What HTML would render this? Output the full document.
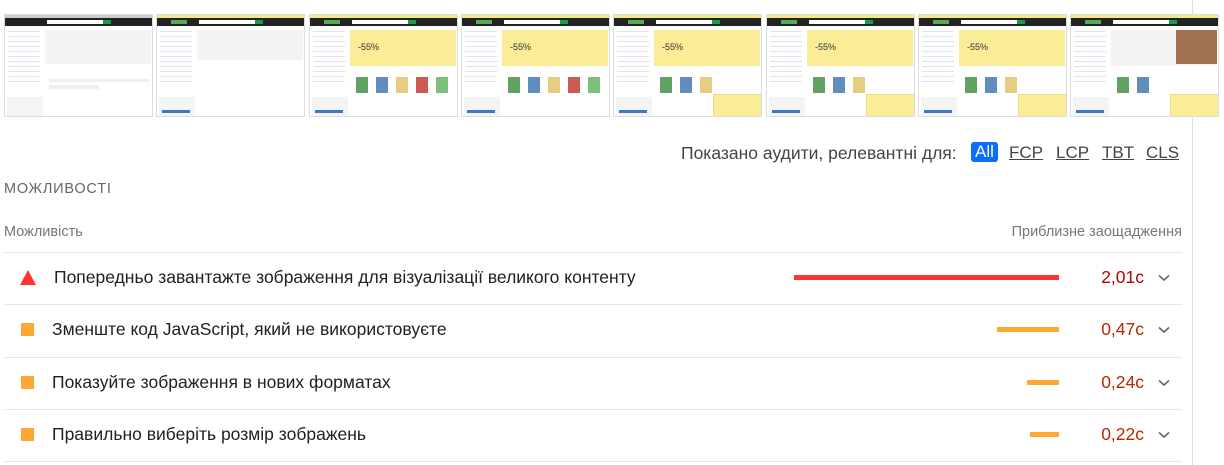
<!DOCTYPE html>
<html><head><meta charset="utf-8">
<style>
*{margin:0;padding:0;box-sizing:border-box}
body{width:1224px;height:465px;background:#fff;font-family:"Liberation Sans",Arial,sans-serif;position:relative;overflow:hidden;color:#212121}
.vline{position:absolute;left:1192px;top:0;width:1px;height:465px;background:#e0e0e0}
.f{position:absolute;top:14px;width:149px;height:103px;border:1px solid #ddd;background:#fff;overflow:hidden}
.f div{position:absolute}
.top{left:0;top:0;width:100%;height:3px;background:#f6e98a}
.hd{left:0;top:3px;width:100%;height:8px;background:#222}
.srch{left:42px;top:5px;width:56px;height:4px;background:#fff}
.go{left:98px;top:5px;width:8px;height:4px;background:#1a9d4a}
.logo{left:14px;top:5px;width:16px;height:4px;background:#5a5}
.sb{left:3px;top:13px;width:32px;height:56px;background:repeating-linear-gradient(#fff 0 3px,#dbe4ef 3px 4px,#fff 4px 5px)}
.sbb{left:2px;top:82px;width:36px;height:20px;background:#f4f4f4}
.btn{left:5px;top:95px;width:28px;height:3px;background:#3e77c2}
.ban{left:40px;top:15px;width:106px;height:36px;background:#fbec98}
.ban i{position:absolute;left:8px;top:12px;font-style:normal;font-size:9px;color:#333}
.gry{left:40px;top:15px;width:106px;height:34px;background:#f3f3f3}
.p{top:62px;width:12px;height:16px;opacity:.8}
.pop{left:99px;top:79px;width:49px;height:24px;background:#fbec98;border:1px solid #eedb80}
.t{position:absolute;font-size:17.5px;white-space:nowrap}
.fl{position:absolute;top:143px;font-size:17px;color:#444;text-decoration:underline}
.v{position:absolute;right:80px;font-size:17.5px}
</style></head><body>
<div class="vline"></div>

<div class="f" style="left:4px"><div class="top" style="background:#ccc"></div><div class="hd"></div><div class="srch"></div><div class="go"></div><div class="sb"></div><div class="sbb"></div><div class="gry"></div><div style="left:44px;top:64px;width:100px;height:3px;background:#eee"></div><div style="left:44px;top:70px;width:50px;height:4px;background:#eee"></div></div>

<div class="f" style="left:156px"><div class="top"></div><div class="hd"></div><div class="logo"></div><div class="srch"></div><div class="go"></div><div class="sb"></div><div class="sbb"></div><div class="btn"></div><div class="gry" style="height:30px"></div></div>

<div class="f" style="left:309px"><div class="top"></div><div class="hd"></div><div class="logo"></div><div class="srch"></div><div class="go"></div><div class="sb"></div><div class="sbb"></div><div class="btn"></div><div class="ban"><i>-55%</i></div><div class="p" style="left:46px;background:#3a8a3a"></div><div class="p" style="left:66px;background:#3a6fb0"></div><div class="p" style="left:86px;background:#e0c060"></div><div class="p" style="left:106px;background:#c0302a"></div><div class="p" style="left:126px;background:#5ab05a"></div></div>

<div class="f" style="left:461px"><div class="top"></div><div class="hd"></div><div class="logo"></div><div class="srch"></div><div class="go"></div><div class="sb"></div><div class="sbb"></div><div class="btn"></div><div class="ban"><i>-55%</i></div><div class="p" style="left:46px;background:#3a8a3a"></div><div class="p" style="left:66px;background:#3a6fb0"></div><div class="p" style="left:86px;background:#e0c060"></div><div class="p" style="left:106px;background:#c0302a"></div><div class="p" style="left:126px;background:#5ab05a"></div></div>

<div class="f" style="left:613px"><div class="top"></div><div class="hd"></div><div class="logo"></div><div class="srch"></div><div class="go"></div><div class="sb"></div><div class="sbb"></div><div class="btn"></div><div class="ban"><i>-55%</i></div><div class="p" style="left:46px;background:#3a8a3a"></div><div class="p" style="left:66px;background:#3a6fb0"></div><div class="p" style="left:86px;background:#e0c060"></div><div class="pop"></div></div>

<div class="f" style="left:766px"><div class="top"></div><div class="hd"></div><div class="logo"></div><div class="srch"></div><div class="go"></div><div class="sb"></div><div class="sbb"></div><div class="btn"></div><div class="ban"><i>-55%</i></div><div class="p" style="left:46px;background:#3a8a3a"></div><div class="p" style="left:66px;background:#3a6fb0"></div><div class="p" style="left:86px;background:#e0c060"></div><div class="pop"></div></div>

<div class="f" style="left:918px"><div class="top"></div><div class="hd"></div><div class="logo"></div><div class="srch"></div><div class="go"></div><div class="sb"></div><div class="sbb"></div><div class="btn"></div><div class="ban"><i>-55%</i></div><div class="p" style="left:46px;background:#3a8a3a"></div><div class="p" style="left:66px;background:#3a6fb0"></div><div class="p" style="left:86px;background:#e0c060"></div><div class="pop"></div></div>

<div class="f" style="left:1070px"><div class="top"></div><div class="hd"></div><div class="logo"></div><div class="srch"></div><div class="go"></div><div class="sb"></div><div class="sbb"></div><div class="btn"></div><div class="ban" style="background:#f3f3f3"></div><div style="left:105px;top:15px;width:41px;height:34px;background:#a07050"></div><div class="p" style="left:46px;background:#3a8a3a"></div><div class="p" style="left:66px;background:#3a6fb0"></div><div class="pop"></div></div>

<div style="position:absolute;left:681px;top:143px;font-size:17.5px;color:#444;white-space:nowrap">Показано аудити, релевантні для:</div>
<div style="position:absolute;left:971px;top:142px;width:27px;height:20px;background:#0b6cff;border-radius:3px;color:#fff;font-size:17px;text-align:center;line-height:20px">All</div>
<div class="fl" style="left:1009px">FCP</div>
<div class="fl" style="left:1056px">LCP</div>
<div class="fl" style="left:1102px">TBT</div>
<div class="fl" style="left:1146px">CLS</div>

<div style="position:absolute;left:4px;top:181px;font-size:14.5px;color:#666;letter-spacing:.8px">МОЖЛИВОСТІ</div>
<div style="position:absolute;left:4px;top:224px;font-size:14.5px;color:#777">Можливість</div>
<div style="position:absolute;right:42px;top:224px;font-size:14.5px;color:#777">Приблизне заощадження</div>

<div style="position:absolute;left:4px;top:252px;width:1178px;height:1px;background:#e6e6e6"></div>
<div style="position:absolute;left:4px;top:304px;width:1178px;height:1px;background:#e6e6e6"></div>
<div style="position:absolute;left:4px;top:357px;width:1178px;height:1px;background:#e6e6e6"></div>
<div style="position:absolute;left:4px;top:409px;width:1178px;height:1px;background:#e6e6e6"></div>
<div style="position:absolute;left:4px;top:461px;width:1178px;height:1px;background:#e6e6e6"></div>

<svg style="position:absolute;left:20px;top:270px" width="16" height="15"><polygon points="8,0 16,15 0,15" fill="#f33"/></svg>
<div style="position:absolute;left:21px;top:323px;width:13px;height:13px;background:#ffa733"></div>
<div style="position:absolute;left:21px;top:376px;width:13px;height:13px;background:#ffa733"></div>
<div style="position:absolute;left:21px;top:428px;width:13px;height:13px;background:#ffa733"></div>

<div class="t" style="left:54px;top:267px">Попередньо завантажте зображення для візуалізації великого контенту</div>
<div class="t" style="left:52px;top:319px">Зменште код JavaScript, який не використовуєте</div>
<div class="t" style="left:52px;top:372px">Показуйте зображення в нових форматах</div>
<div class="t" style="left:52px;top:424px">Правильно виберіть розмір зображень</div>

<div style="position:absolute;left:794px;top:275px;width:265px;height:5px;background:#f33"></div>
<div style="position:absolute;left:997px;top:327px;width:62px;height:5px;background:#ffa733"></div>
<div style="position:absolute;left:1027px;top:380px;width:32px;height:5px;background:#ffa733"></div>
<div style="position:absolute;left:1030px;top:432px;width:29px;height:5px;background:#ffa733"></div>

<div class="v" style="top:267px;color:#b00">2,01с</div>
<div class="v" style="top:319px;color:#b32a00">0,47с</div>
<div class="v" style="top:372px;color:#b32a00">0,24с</div>
<div class="v" style="top:424px;color:#b32a00">0,22с</div>

<svg style="position:absolute;left:1158px;top:274px" width="12" height="8"><path d="M1,1.5 L6,6 L11,1.5" fill="none" stroke="#666" stroke-width="1.6"/></svg>
<svg style="position:absolute;left:1158px;top:326px" width="12" height="8"><path d="M1,1.5 L6,6 L11,1.5" fill="none" stroke="#666" stroke-width="1.6"/></svg>
<svg style="position:absolute;left:1158px;top:379px" width="12" height="8"><path d="M1,1.5 L6,6 L11,1.5" fill="none" stroke="#666" stroke-width="1.6"/></svg>
<svg style="position:absolute;left:1158px;top:431px" width="12" height="8"><path d="M1,1.5 L6,6 L11,1.5" fill="none" stroke="#666" stroke-width="1.6"/></svg>
</body></html>
